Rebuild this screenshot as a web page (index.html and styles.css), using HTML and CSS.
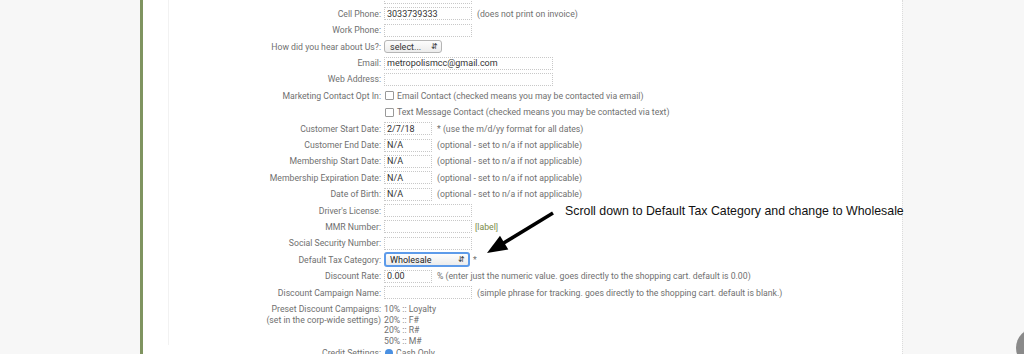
FILE: index.html
```html
<!DOCTYPE html>
<html>
  <head>
    <meta charset="utf-8">
    <title>Customer Details</title>
    <link rel="stylesheet" href="styles.css">
  </head>
  <body>
    <div class="gutter"></div>
    <div class="page">
      <div class="inner">
        <div class="form">
          <span class="lbl"></span>
          <span class="fld"><input class="txt w87" type="text"></span>

          <span class="lbl">Cell Phone:</span>
          <span class="fld"><input class="txt w87" type="text" value="3033739333"><span class="note">(does not print on invoice)</span></span>

          <span class="lbl">Work Phone:</span>
          <span class="fld"><input class="txt w87" type="text"></span>

          <span class="lbl">How did you hear about Us?:</span>
          <span class="fld"><span class="sel small">select...<span class="arrows">&#8693;</span></span></span>

          <span class="lbl">Email:</span>
          <span class="fld"><input class="txt w168" type="text" value="metropolismcc@gmail.com"></span>

          <span class="lbl">Web Address:</span>
          <span class="fld"><input class="txt w168" type="text"></span>

          <span class="lbl">Marketing Contact Opt In:</span>
          <span class="fld"><span class="box"></span>Email Contact (checked means you may be contacted via email)</span>

          <span class="lbl"></span>
          <span class="fld"><span class="box"></span>Text Message Contact (checked means you may be contacted via text)</span>

          <span class="lbl">Customer Start Date:</span>
          <span class="fld"><input class="txt w48" type="text" value="2/7/18"><span class="note">* (use the m/d/yy format for all dates)</span></span>

          <span class="lbl">Customer End Date:</span>
          <span class="fld"><input class="txt w48" type="text" value="N/A"><span class="note">(optional - set to n/a if not applicable)</span></span>

          <span class="lbl">Membership Start Date:</span>
          <span class="fld"><input class="txt w48" type="text" value="N/A"><span class="note">(optional - set to n/a if not applicable)</span></span>

          <span class="lbl">Membership Expiration Date:</span>
          <span class="fld"><input class="txt w48" type="text" value="N/A"><span class="note">(optional - set to n/a if not applicable)</span></span>

          <span class="lbl">Date of Birth:</span>
          <span class="fld"><input class="txt w48" type="text" value="N/A"><span class="note">(optional - set to n/a if not applicable)</span></span>

          <span class="lbl">Driver's License:</span>
          <span class="fld"><input class="txt w87" type="text"></span>

          <span class="lbl">MMR Number:</span>
          <span class="fld"><input class="txt w87" type="text"><span class="tag">[label]</span></span>

          <span class="lbl">Social Security Number:</span>
          <span class="fld"><input class="txt w87" type="text"></span>

          <span class="lbl">Default Tax Category:</span>
          <span class="fld"><span class="sel focus">Wholesale<span class="arrows">&#8693;</span></span><span class="star">*</span></span>

          <span class="lbl">Discount Rate:</span>
          <span class="fld"><input class="txt w48" type="text" value="0.00"><span class="note">% (enter just the numeric value. goes directly to the shopping cart. default is 0.00)</span></span>

          <span class="lbl">Discount Campaign Name:</span>
          <span class="fld"><input class="txt w87" type="text"><span class="note">(simple phrase for tracking. goes directly to the shopping cart. default is blank.)</span></span>

          <span class="lbl multi">Preset Discount Campaigns:<br>(set in the corp-wide settings)</span>
          <span class="fld multi">10% :: Loyalty<br>20% :: F#<br>20% :: R#<br>50% :: M#</span>

          <span class="lbl last">Credit Settings:</span>
          <span class="fld last"><span class="radio"></span>Cash Only</span>
        </div>
      </div>
    </div>
    <div class="side"></div>

    <p class="callout">Scroll down to Default Tax Category and change to Wholesale</p>
    <svg class="pointer" width="80" height="55" viewBox="0 0 80 55">
      <line x1="73" y1="8" x2="22" y2="39" stroke="#000" stroke-width="3.5"/>
      <polygon points="7,48 20,30.7 28.3,44.5" fill="#000"/>
    </svg>
    <div class="bubble"></div>
  </body>
</html>
```

FILE: styles.css
```css
body{
  margin: 0;
  display: flex;
  height: 354px;
  overflow: hidden;
  background-color: #f7f7f7;
  font-family: Roboto, "Liberation Sans", sans-serif;
  font-size: 8.7px;
  color: #707070;
}
.gutter{
  width: 140px;
  flex-shrink: 0;
}
.page{
  width: 762px;
  flex-shrink: 0;
  background-color: #fff;
  border-left: 3px solid #7f9460;
  padding-left: 25px;
  box-sizing: border-box;
}
.inner{
  border-left: 1px solid #f2f2f2;
  height: 100%;
}
.side{
  flex: 1;
  border-left: 1px dotted #dcdcdc;
}
.form{
  display: grid;
  grid-template-columns: 212px 1fr;
  column-gap: 3px;
  row-gap: 2.4px;
  margin-top: -9.5px;
}
.lbl{
  text-align: right;
  height: 14px;
  line-height: 14px;
  white-space: nowrap;
}
.fld{
  display: flex;
  align-items: center;
  height: 14px;
  white-space: nowrap;
}
.txt{
  box-sizing: border-box;
  height: 13px;
  margin: 0;
  padding: 0 2px;
  border: 1px dotted #c8c8c8;
  font-family: Roboto, "Liberation Sans", sans-serif;
  font-size: 9px;
  color: #333;
  background: #fff;
}
.w87{ width: 88px; }
.w168{ width: 169px; }
.w48{ width: 48px; }
.note{
  margin-left: 5px;
}
.tag{
  margin-left: 3px;
  color: #7a8a4a;
}
.star{
  margin-left: 3px;
}
.sel{
  box-sizing: border-box;
  display: flex;
  align-items: center;
  justify-content: space-between;
  height: 13px;
  padding: 0 3px 0 5px;
  border: 1px solid #b5b5b5;
  border-radius: 3px;
  background: linear-gradient(#fdfdfd, #ececec);
  color: #333;
  font-size: 9px;
}
.sel.small{
  width: 58px;
}
.sel.focus{
  width: 86px;
  height: 15px;
  border: 2px solid #5d9bea;
  padding-left: 4px;
  color: #222;
}
.arrows{
  font-size: 8px;
  color: #444;
}
.box{
  width: 7px;
  height: 7px;
  border: 1px solid #999;
  border-radius: 1px;
  margin: 0 3px 0 1px;
}
.radio{
  width: 8px;
  height: 8px;
  border-radius: 50%;
  background-color: #4a90e2;
  margin: 0 3px 0 1px;
}
.lbl.multi, .fld.multi{
  height: auto;
  line-height: 10.5px;
  display: block;
  padding-top: 2.5px;
}
.last{
  margin-top: -3px;
}
.callout{
  position: absolute;
  left: 565px;
  top: 204px;
  margin: 0;
  font-family: "Liberation Sans", Arial, sans-serif;
  font-size: 12.35px;
  color: #111;
}
.pointer{
  position: absolute;
  left: 480px;
  top: 205px;
}
.bubble{
  position: absolute;
  left: 1016px;
  top: 328px;
  width: 40px;
  height: 40px;
  border-radius: 50%;
  background-color: #8a8a8a;
}
```
